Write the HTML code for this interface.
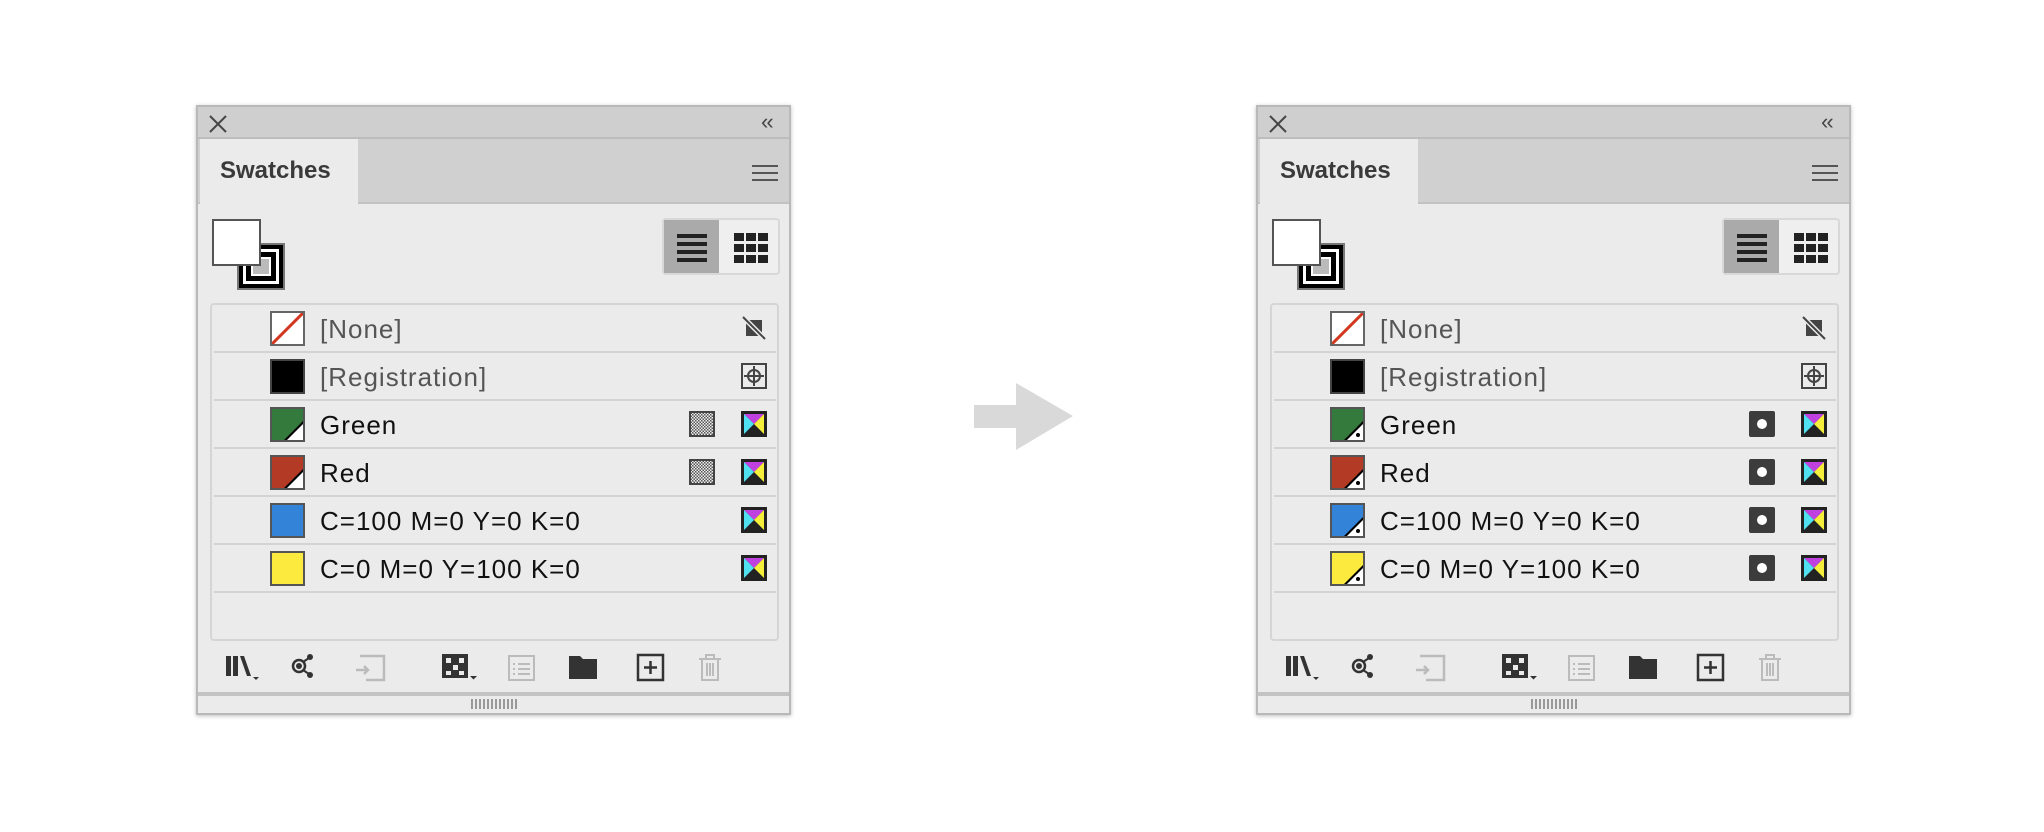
<!DOCTYPE html>
<html><head><meta charset="utf-8"><style>
*{margin:0;padding:0;box-sizing:border-box}
body{width:2044px;height:832px;background:#fff;position:relative;overflow:hidden;font-family:"Liberation Sans",sans-serif}
.p{position:absolute;top:105px;width:595px;height:610px;background:#ebebeb;border:2px solid #b9b9b9;box-shadow:0 1px 4px rgba(0,0,0,.25)}
.a{position:absolute}
.tb{left:0;top:0;width:591px;height:32px;background:#cfcfcf;border-bottom:2px solid #bdbdbd}
.tr{left:0;top:32px;width:591px;height:65px;background:#d0d0d0;border-bottom:2px solid #c2c2c2}
.tab{left:2px;top:32px;width:158px;height:67px;background:#ebebeb}
.tab span{position:absolute;left:20px;top:18px;font-weight:bold;font-size:24px;color:#3a3a3a}
.list{left:12px;top:196px;width:569px;height:338px;border:2px solid #d5d5d5;border-radius:4px;background:#ebebeb}
.row{position:absolute;left:2px;width:562px;height:48px;border-bottom:2px solid #d3d3d3}
.sw{position:absolute;left:56px;top:6px;width:35px;height:35px;border:2px solid #555}
.nm{position:absolute;left:106px;top:9px;font-size:26px;letter-spacing:1px;color:#111}
.g{color:#555}
.ic{position:absolute;top:10px;width:26px;height:26px}
.r{left:527px}.m{left:475px}
.bb{left:0;top:585px;width:591px;height:21px;border-top:4px solid #c3c3c3;background:#ebebeb}
.tl{left:0;top:541px}
</style></head><body>

<svg class="a" style="left:0;top:0" width="2044" height="832"><polygon points="974,405 1016,405 1016,383 1073,416 1016,450 1016,428 974,428" fill="#d8d9d8"/></svg>

<!-- PANEL 1 -->
<div class="p" style="left:196px">
<div class="a tb"></div>
<svg class="a" style="left:11px;top:8px" width="18" height="18"><path d="M1 1L17 17M17 1L1 17" stroke="#444" stroke-width="2"/></svg>
<div class="a" style="left:563px;top:2px;font-size:22px;color:#444;letter-spacing:-2px">‹‹</div>
<div class="a tr"></div>
<div class="a tab"><span>Swatches</span></div>
<svg class="a" style="left:554px;top:57px" width="26" height="18"><path d="M0 2H26M0 9H26M0 16H26" stroke="#555" stroke-width="2"/></svg>
<div class="a" style="left:39px;top:136px;width:48px;height:47px;background:#000;border:2px solid #777"><div style="position:absolute;left:4px;top:4px;width:36px;height:35px;border:3px solid #fff"><div style="position:absolute;left:5px;top:5px;width:20px;height:19px;border:2px solid #fff;background:#bbb"></div></div></div>
<div class="a" style="left:14px;top:112px;width:49px;height:47px;background:#fff;border:2px solid #555"></div>
<div class="a" style="left:464px;top:111px;width:118px;height:57px;border:2px solid #d8d8d8;border-radius:4px;background:#efefef"></div>
<div class="a" style="left:466px;top:113px;width:55px;height:53px;background:#aaa"></div>
<svg class="a" style="left:479px;top:127px" width="30" height="28"><path d="M0 2H30M0 10H30M0 18H30M0 26H30" stroke="#222" stroke-width="4"/></svg>
<svg class="a" style="left:536px;top:126px" width="34" height="30" fill="#222"><rect x="0" y="0" width="10" height="8"/><rect x="12" y="0" width="10" height="8"/><rect x="24" y="0" width="10" height="8"/><rect x="0" y="11" width="10" height="8"/><rect x="12" y="11" width="10" height="8"/><rect x="24" y="11" width="10" height="8"/><rect x="0" y="22" width="10" height="8"/><rect x="12" y="22" width="10" height="8"/><rect x="24" y="22" width="10" height="8"/></svg>
<div class="a list">
<div class="row" style="top:0"><div class="sw" style="background:#fff;border-color:#666"><svg width="31" height="31" style="position:absolute;left:0;top:0"><path d="M0 31L31 0" stroke="#d2381f" stroke-width="3"/></svg></div><div class="nm g">[None]</div><svg class="ic r" viewBox="0 0 26 26"><path d="M3 5H21V21H5V5Z" fill="#444"/><path d="M2 2L24 24" stroke="#ebebeb" stroke-width="5"/><path d="M2 2L24 24" stroke="#444" stroke-width="2"/></svg></div>
<div class="row" style="top:48px"><div class="sw" style="background:#000;border-color:#444"></div><div class="nm g">[Registration]</div><svg class="ic r" viewBox="0 0 26 26" fill="none" stroke="#444" stroke-width="2"><rect x="1" y="1" width="24" height="24"/><circle cx="13" cy="13" r="6"/><path d="M13 3V23M3 13H23"/></svg></div>
<div class="row" style="top:96px"><div class="sw" style="background:#347a3c"><svg width="31" height="31" style="position:absolute;left:0;top:0"><path d="M31 12V31H12Z" fill="#000"/><path d="M31 15V31H15Z" fill="#fff"/></svg></div><div class="nm">Green</div><svg class="ic m" viewBox="0 0 26 26"><defs><pattern id="ch" width="3" height="3" patternUnits="userSpaceOnUse"><rect width="3" height="3" fill="#eee"/><rect width="1.5" height="1.5" fill="#555"/><rect x="1.5" y="1.5" width="1.5" height="1.5" fill="#555"/></pattern></defs><rect x="1" y="1" width="24" height="24" fill="url(#ch)" stroke="#444" stroke-width="2"/></svg><svg class="ic r" viewBox="0 0 26 26"><rect width="26" height="26" fill="#222"/><path d="M3 3H23L13 13Z" fill="#c040e0"/><path d="M3 3V23L13 13Z" fill="#50e0f0"/><path d="M23 3V23L13 13Z" fill="#f5ee3a"/></svg></div>
<div class="row" style="top:144px"><div class="sw" style="background:#b33a25"><svg width="31" height="31" style="position:absolute;left:0;top:0"><path d="M31 12V31H12Z" fill="#000"/><path d="M31 15V31H15Z" fill="#fff"/></svg></div><div class="nm">Red</div><svg class="ic m" viewBox="0 0 26 26"><rect x="1" y="1" width="24" height="24" fill="url(#ch)" stroke="#444" stroke-width="2"/></svg><svg class="ic r" viewBox="0 0 26 26"><rect width="26" height="26" fill="#222"/><path d="M3 3H23L13 13Z" fill="#c040e0"/><path d="M3 3V23L13 13Z" fill="#50e0f0"/><path d="M23 3V23L13 13Z" fill="#f5ee3a"/></svg></div>
<div class="row" style="top:192px"><div class="sw" style="background:#3384d8"></div><div class="nm">C=100 M=0 Y=0 K=0</div><svg class="ic r" viewBox="0 0 26 26"><rect width="26" height="26" fill="#222"/><path d="M3 3H23L13 13Z" fill="#c040e0"/><path d="M3 3V23L13 13Z" fill="#50e0f0"/><path d="M23 3V23L13 13Z" fill="#f5ee3a"/></svg></div>
<div class="row" style="top:240px"><div class="sw" style="background:#fdea3f"></div><div class="nm">C=0 M=0 Y=100 K=0</div><svg class="ic r" viewBox="0 0 26 26"><rect width="26" height="26" fill="#222"/><path d="M3 3H23L13 13Z" fill="#c040e0"/><path d="M3 3V23L13 13Z" fill="#50e0f0"/><path d="M23 3V23L13 13Z" fill="#f5ee3a"/></svg></div>
</div>
<svg class="a tl" width="591" height="40">
<g fill="#333"><rect x="28" y="8" width="5" height="20"/><rect x="35" y="8" width="5" height="20"/><path d="M42 8l4 0 7 20-4 0z"/><path d="M55 29h6l-3 3z"/></g>
<g fill="none" stroke="#333" stroke-width="2.5"><circle cx="101" cy="18" r="6"/></g><g fill="#333"><circle cx="101" cy="18" r="3"/><circle cx="112" cy="9" r="3"/><circle cx="112" cy="27" r="3"/></g><path d="M105 14L111 10M105 22L111 26" stroke="#333" stroke-width="2"/>
<g fill="none" stroke="#bbb" stroke-width="2.5"><path d="M162 8h24v24h-18M158 22h12M166 18l4 4-4 4"/></g>
<g fill="#333"><rect x="244" y="6" width="26" height="24"/><path d="M272 28h7l-3.5 3.5z"/></g><g fill="#ebebeb"><rect x="248" y="10" width="5" height="5"/><rect x="261" y="10" width="5" height="5"/><rect x="255" y="17" width="5" height="5"/><rect x="248" y="23" width="5" height="4"/><rect x="261" y="23" width="5" height="4"/></g>
<g fill="none" stroke="#bbb" stroke-width="2"><rect x="311" y="8" width="25" height="24"/><path d="M320 16h12M320 21h12M320 26h12M315 16h2M315 21h2M315 26h2"/></g>
<path d="M371 8h11l3 3h14v20h-28z" fill="#333"/>
<g fill="none" stroke="#333" stroke-width="2.5"><rect x="440" y="7" width="25" height="25"/><path d="M452.5 13v13M446 19.5h13"/></g>
<g fill="none" stroke="#bbb" stroke-width="2"><path d="M501 11h22M508 11V7h8v4M504 11v21h16V11M509 15v13M512 15v13M515 15v13"/></g>
</svg>
<div class="a bb"><div style="position:absolute;left:273px;top:3px;width:47px;height:10px;background:repeating-linear-gradient(90deg,#999 0 2px,transparent 2px 4px)"></div></div>
</div>

<!-- PANEL 2 -->
<div class="p" style="left:1256px">
<div class="a tb"></div>
<svg class="a" style="left:11px;top:8px" width="18" height="18"><path d="M1 1L17 17M17 1L1 17" stroke="#444" stroke-width="2"/></svg>
<div class="a" style="left:563px;top:2px;font-size:22px;color:#444;letter-spacing:-2px">‹‹</div>
<div class="a tr"></div>
<div class="a tab"><span>Swatches</span></div>
<svg class="a" style="left:554px;top:57px" width="26" height="18"><path d="M0 2H26M0 9H26M0 16H26" stroke="#555" stroke-width="2"/></svg>
<div class="a" style="left:39px;top:136px;width:48px;height:47px;background:#000;border:2px solid #777"><div style="position:absolute;left:4px;top:4px;width:36px;height:35px;border:3px solid #fff"><div style="position:absolute;left:5px;top:5px;width:20px;height:19px;border:2px solid #fff;background:#bbb"></div></div></div>
<div class="a" style="left:14px;top:112px;width:49px;height:47px;background:#fff;border:2px solid #555"></div>
<div class="a" style="left:464px;top:111px;width:118px;height:57px;border:2px solid #d8d8d8;border-radius:4px;background:#efefef"></div>
<div class="a" style="left:466px;top:113px;width:55px;height:53px;background:#aaa"></div>
<svg class="a" style="left:479px;top:127px" width="30" height="28"><path d="M0 2H30M0 10H30M0 18H30M0 26H30" stroke="#222" stroke-width="4"/></svg>
<svg class="a" style="left:536px;top:126px" width="34" height="30" fill="#222"><rect x="0" y="0" width="10" height="8"/><rect x="12" y="0" width="10" height="8"/><rect x="24" y="0" width="10" height="8"/><rect x="0" y="11" width="10" height="8"/><rect x="12" y="11" width="10" height="8"/><rect x="24" y="11" width="10" height="8"/><rect x="0" y="22" width="10" height="8"/><rect x="12" y="22" width="10" height="8"/><rect x="24" y="22" width="10" height="8"/></svg>
<div class="a list">
<div class="row" style="top:0"><div class="sw" style="background:#fff;border-color:#666"><svg width="31" height="31" style="position:absolute;left:0;top:0"><path d="M0 31L31 0" stroke="#d2381f" stroke-width="3"/></svg></div><div class="nm g">[None]</div><svg class="ic r" viewBox="0 0 26 26"><path d="M3 5H21V21H5V5Z" fill="#444"/><path d="M2 2L24 24" stroke="#ebebeb" stroke-width="5"/><path d="M2 2L24 24" stroke="#444" stroke-width="2"/></svg></div>
<div class="row" style="top:48px"><div class="sw" style="background:#000;border-color:#444"></div><div class="nm g">[Registration]</div><svg class="ic r" viewBox="0 0 26 26" fill="none" stroke="#444" stroke-width="2"><rect x="1" y="1" width="24" height="24"/><circle cx="13" cy="13" r="6"/><path d="M13 3V23M3 13H23"/></svg></div>
<div class="row" style="top:96px"><div class="sw" style="background:#347a3c"><svg width="31" height="31" style="position:absolute;left:0;top:0"><path d="M31 12V31H12Z" fill="#000"/><path d="M31 15V31H15Z" fill="#fff"/><circle cx="26" cy="26" r="2" fill="#000"/></svg></div><div class="nm">Green</div><svg class="ic m" viewBox="0 0 26 26"><rect width="26" height="26" rx="2" fill="#3c3c3c"/><circle cx="13" cy="13" r="5" fill="#fff"/></svg><svg class="ic r" viewBox="0 0 26 26"><rect width="26" height="26" fill="#222"/><path d="M3 3H23L13 13Z" fill="#c040e0"/><path d="M3 3V23L13 13Z" fill="#50e0f0"/><path d="M23 3V23L13 13Z" fill="#f5ee3a"/></svg></div>
<div class="row" style="top:144px"><div class="sw" style="background:#b33a25"><svg width="31" height="31" style="position:absolute;left:0;top:0"><path d="M31 12V31H12Z" fill="#000"/><path d="M31 15V31H15Z" fill="#fff"/><circle cx="26" cy="26" r="2" fill="#000"/></svg></div><div class="nm">Red</div><svg class="ic m" viewBox="0 0 26 26"><rect width="26" height="26" rx="2" fill="#3c3c3c"/><circle cx="13" cy="13" r="5" fill="#fff"/></svg><svg class="ic r" viewBox="0 0 26 26"><rect width="26" height="26" fill="#222"/><path d="M3 3H23L13 13Z" fill="#c040e0"/><path d="M3 3V23L13 13Z" fill="#50e0f0"/><path d="M23 3V23L13 13Z" fill="#f5ee3a"/></svg></div>
<div class="row" style="top:192px"><div class="sw" style="background:#3384d8"><svg width="31" height="31" style="position:absolute;left:0;top:0"><path d="M31 12V31H12Z" fill="#000"/><path d="M31 15V31H15Z" fill="#fff"/><circle cx="26" cy="26" r="2" fill="#000"/></svg></div><div class="nm">C=100 M=0 Y=0 K=0</div><svg class="ic m" viewBox="0 0 26 26"><rect width="26" height="26" rx="2" fill="#3c3c3c"/><circle cx="13" cy="13" r="5" fill="#fff"/></svg><svg class="ic r" viewBox="0 0 26 26"><rect width="26" height="26" fill="#222"/><path d="M3 3H23L13 13Z" fill="#c040e0"/><path d="M3 3V23L13 13Z" fill="#50e0f0"/><path d="M23 3V23L13 13Z" fill="#f5ee3a"/></svg></div>
<div class="row" style="top:240px"><div class="sw" style="background:#fdea3f"><svg width="31" height="31" style="position:absolute;left:0;top:0"><path d="M31 12V31H12Z" fill="#000"/><path d="M31 15V31H15Z" fill="#fff"/><circle cx="26" cy="26" r="2" fill="#000"/></svg></div><div class="nm">C=0 M=0 Y=100 K=0</div><svg class="ic m" viewBox="0 0 26 26"><rect width="26" height="26" rx="2" fill="#3c3c3c"/><circle cx="13" cy="13" r="5" fill="#fff"/></svg><svg class="ic r" viewBox="0 0 26 26"><rect width="26" height="26" fill="#222"/><path d="M3 3H23L13 13Z" fill="#c040e0"/><path d="M3 3V23L13 13Z" fill="#50e0f0"/><path d="M23 3V23L13 13Z" fill="#f5ee3a"/></svg></div>
</div>
<svg class="a tl" width="591" height="40">
<g fill="#333"><rect x="28" y="8" width="5" height="20"/><rect x="35" y="8" width="5" height="20"/><path d="M42 8l4 0 7 20-4 0z"/><path d="M55 29h6l-3 3z"/></g>
<g fill="none" stroke="#333" stroke-width="2.5"><circle cx="101" cy="18" r="6"/></g><g fill="#333"><circle cx="101" cy="18" r="3"/><circle cx="112" cy="9" r="3"/><circle cx="112" cy="27" r="3"/></g><path d="M105 14L111 10M105 22L111 26" stroke="#333" stroke-width="2"/>
<g fill="none" stroke="#bbb" stroke-width="2.5"><path d="M162 8h24v24h-18M158 22h12M166 18l4 4-4 4"/></g>
<g fill="#333"><rect x="244" y="6" width="26" height="24"/><path d="M272 28h7l-3.5 3.5z"/></g><g fill="#ebebeb"><rect x="248" y="10" width="5" height="5"/><rect x="261" y="10" width="5" height="5"/><rect x="255" y="17" width="5" height="5"/><rect x="248" y="23" width="5" height="4"/><rect x="261" y="23" width="5" height="4"/></g>
<g fill="none" stroke="#bbb" stroke-width="2"><rect x="311" y="8" width="25" height="24"/><path d="M320 16h12M320 21h12M320 26h12M315 16h2M315 21h2M315 26h2"/></g>
<path d="M371 8h11l3 3h14v20h-28z" fill="#333"/>
<g fill="none" stroke="#333" stroke-width="2.5"><rect x="440" y="7" width="25" height="25"/><path d="M452.5 13v13M446 19.5h13"/></g>
<g fill="none" stroke="#bbb" stroke-width="2"><path d="M501 11h22M508 11V7h8v4M504 11v21h16V11M509 15v13M512 15v13M515 15v13"/></g>
</svg>
<div class="a bb"><div style="position:absolute;left:273px;top:3px;width:47px;height:10px;background:repeating-linear-gradient(90deg,#999 0 2px,transparent 2px 4px)"></div></div>
</div>
</body></html>
